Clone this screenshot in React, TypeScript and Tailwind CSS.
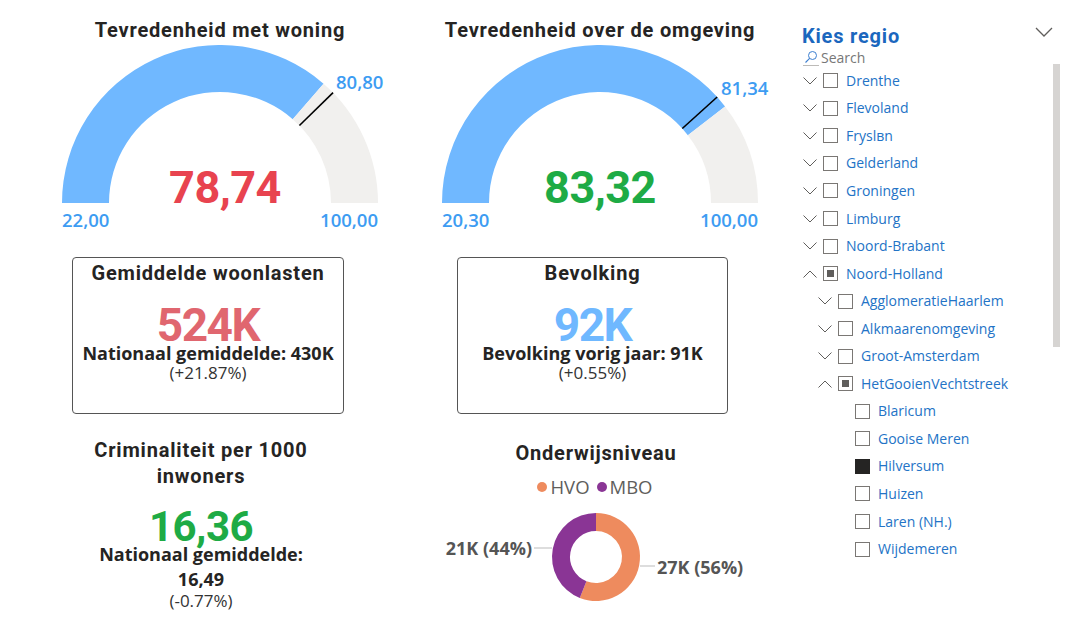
const TITLE = "font-['Roboto',sans-serif] font-bold text-[20px] tracking-[0.8px] text-[#252423]";
const BODY = "font-['Open_Sans',sans-serif]";

function pt(cx: number, cy: number, r: number, a: number) {
  const rad = (a * Math.PI) / 180;
  return [cx - r * Math.cos(rad), cy - r * Math.sin(rad)];
}

function band(cx: number, cy: number, r0: number, r1: number, a0: number, a1: number) {
  const [x0, y0] = pt(cx, cy, r1, a0);
  const [x1, y1] = pt(cx, cy, r1, a1);
  const [x2, y2] = pt(cx, cy, r0, a1);
  const [x3, y3] = pt(cx, cy, r0, a0);
  return `M${x0} ${y0} A${r1} ${r1} 0 0 1 ${x1} ${y1} L${x2} ${y2} A${r0} ${r0} 0 0 0 ${x3} ${y3} Z`;
}

interface GaugeProps {
  title: string;
  min: number;
  max: number;
  value: number;
  target: number;
  valueColor: string;
  valueDx?: number;
  targetPos: [number, number];
}

const fmt = (n: number) => n.toFixed(2).replace(".", ",");

function Gauge({ title, min, max, value, target, valueColor, valueDx = 0, targetPos }: GaugeProps) {
  const cx = 190;
  const cy = 158;
  const av = ((value - min) / (max - min)) * 180;
  const at = ((target - min) / (max - min)) * 180;
  const [tx0, ty0] = pt(cx, cy, 111, at);
  const [tx1, ty1] = pt(cx, cy, 158, at);
  return (
    <div className="w-[380px]">
      <div className={`${TITLE} pt-[16px] text-center leading-[29px]`}>{title}</div>
      <svg width="380" height="190" className="block">
        <path d={band(cx, cy, 111, 158, 0, av)} fill="#70B8FF" />
        <path d={band(cx, cy, 111, 158, av, 180)} fill="#F1F0EE" />
        <line x1={tx0} y1={ty0} x2={tx1} y2={ty1} stroke="#000" strokeWidth="1.6" />
        <text
          x={cx + valueDx}
          y={cy}
          textAnchor="middle"
          fill={valueColor}
          fontFamily="Roboto, sans-serif"
          fontWeight="700"
          fontSize="45"
          letterSpacing="-0.5"
        >
          {fmt(value)}
        </text>
        <g fontFamily="'Open Sans', sans-serif" fontWeight="600" fontSize="18.5" fill="#3D9CF2">
          <text x={32} y={182}>
            {fmt(min)}
          </text>
          <text x={348} y={182} textAnchor="end">
            {fmt(max)}
          </text>
          <text x={targetPos[0]} y={targetPos[1]}>
            {fmt(target)}
          </text>
        </g>
      </svg>
    </div>
  );
}

function Card({
  title,
  value,
  color,
  sub,
  pct,
  className,
}: {
  title: string;
  value: string;
  color: string;
  sub: string;
  pct: string;
  className: string;
}) {
  return (
    <div className={`h-[157px] rounded-[4px] border border-[#555] text-center ${className}`}>
      <div className={`${TITLE} mt-[2px] leading-[26px]`}>{title}</div>
      <div
        className={`font-['Roboto',sans-serif] font-bold text-[46px] tracking-[-1.5px] leading-[36px] mt-[21px] ${color}`}
      >
        {value}
      </div>
      <div className={`${BODY} mt-[1px] font-bold text-[18px] leading-[18px] text-[#252423]`}>{sub}</div>
      <div className={`${BODY} text-[17px] leading-[22px] text-[#333]`}>{pct}</div>
    </div>
  );
}

function Donut() {
  const cx = 186;
  const cy = 59;
  const R = 44;
  const r = 26;
  const p = (rad: number, t: number) => {
    const a = (t * Math.PI) / 180;
    return [cx + rad * Math.sin(a), cy - rad * Math.cos(a)];
  };
  const seg = (t0: number, t1: number) => {
    const [a, b] = p(R, t0);
    const [c, d] = p(R, t1);
    const [e, f] = p(r, t1);
    const [g, h] = p(r, t0);
    const large = t1 - t0 > 180 ? 1 : 0;
    return `M${a} ${b} A${R} ${R} 0 ${large} 1 ${c} ${d} L${e} ${f} A${r} ${r} 0 ${large} 0 ${g} ${h} Z`;
  };
  const split = 0.56 * 360;
  return (
    <svg width="372" height="120" className="block">
      <path d={seg(0, split)} fill="#EE8B5E" />
      <path d={seg(split, 360)} fill="#8A3595" />
      <line x1="124" y1="50" x2="142" y2="50" stroke="#BBB" strokeWidth="1" />
      <line x1="230" y1="68" x2="245" y2="68" stroke="#BBB" strokeWidth="1" />
      <g fontFamily="'Open Sans', sans-serif" fontWeight="700" fontSize="18" fill="#555">
        <text x="122" y="57" textAnchor="end">
          21K (44%)
        </text>
        <text x="247" y="76">
          27K (56%)
        </text>
      </g>
    </svg>
  );
}

function Chevron({ up }: { up?: boolean }) {
  return (
    <svg width="14" height="8" viewBox="0 0 14 8" className="block">
      <path
        d={up ? "M0.5 7.5 L7 1 L13.5 7.5" : "M0.5 0.5 L7 7 L13.5 0.5"}
        fill="none"
        stroke="#605E5C"
        strokeWidth="1"
      />
    </svg>
  );
}

type Item = { label: string; level: 0 | 1 | 2; state?: "partial" | "checked"; open?: boolean };

const items: Item[] = [
  { label: "Drenthe", level: 0 },
  { label: "Flevoland", level: 0 },
  { label: "Fryslвn", level: 0 },
  { label: "Gelderland", level: 0 },
  { label: "Groningen", level: 0 },
  { label: "Limburg", level: 0 },
  { label: "Noord-Brabant", level: 0 },
  { label: "Noord-Holland", level: 0, state: "partial", open: true },
  { label: "AgglomeratieHaarlem", level: 1 },
  { label: "Alkmaarenomgeving", level: 1 },
  { label: "Groot-Amsterdam", level: 1 },
  { label: "HetGooienVechtstreek", level: 1, state: "partial", open: true },
  { label: "Blaricum", level: 2 },
  { label: "Gooise Meren", level: 2 },
  { label: "Hilversum", level: 2, state: "checked" },
  { label: "Huizen", level: 2 },
  { label: "Laren (NH.)", level: 2 },
  { label: "Wijdemeren", level: 2 },
];

function Checkbox({ state }: { state?: "partial" | "checked" }) {
  if (state === "checked") return <div className="h-[15px] w-[15px] bg-[#252423]" />;
  return (
    <div className="flex h-[15px] w-[15px] items-center justify-center border border-[#7A7774]">
      {state === "partial" && <div className="h-[7px] w-[7px] bg-[#605E5C]" />}
    </div>
  );
}

function Slicer() {
  return (
    <div className="w-[288px] pl-[12px] pr-[18px]">
      <div className="flex items-center justify-between pt-[23px]">
        <div className="font-['Roboto',sans-serif] text-[20px] font-bold tracking-[0.8px] leading-[26px] text-[#1B67BE]">
          Kies regio
        </div>
        <div className="mb-[8px] mr-[7px]">
          <svg width="18" height="10" viewBox="0 0 18 10" className="block">
            <path d="M1 1 L9 9 L17 1" fill="none" stroke="#605E5C" strokeWidth="1.3" />
          </svg>
        </div>
      </div>
      <div className="flex items-center">
        <div className="ml-[1px] h-[16px] w-[16px]">
          <svg width="16" height="16" viewBox="0 0 16 16" className="block">
            <circle cx="9.5" cy="5.5" r="4" fill="none" stroke="#3D7FD0" strokeWidth="1" />
            <path d="M6.6 8.4 L2.5 12.5" stroke="#3D7FD0" strokeWidth="1.1" />
            <path d="M0 15.5 L16 15.5" stroke="#BDBBB8" strokeWidth="1" />
          </svg>
        </div>
        <span className={`${BODY} ml-[2px] text-[14px] leading-[18px] text-[#777]`}>Search</span>
      </div>
      <div className="flex">
        <div className="flex-1">
          {items.map((it) => (
            <div
              key={it.label}
              className={`flex h-[27.55px] items-center ${
                it.level === 0 ? "pl-[1px]" : it.level === 1 ? "pl-[16px]" : "pl-[53px]"
              }`}
            >
              {it.level < 2 && (
                <div className="w-[20px]">
                  <Chevron up={it.open} />
                </div>
              )}
              <Checkbox state={it.state} />
              <span className={`${BODY} ml-[8px] text-[14px] leading-[18px] text-[#2373C6]`}>
                {it.label}
              </span>
            </div>
          ))}
        </div>
        <div className="w-[7px]">
          <div className="-mt-[3px] h-[283px] w-[7px] bg-[#D6D4D2]" />
        </div>
      </div>
    </div>
  );
}

export default function App() {
  return (
    <div className="flex h-[622px] w-[1078px] overflow-hidden bg-white">
      <div className="ml-[30px] w-[760px]">
        <div className="flex">
          <Gauge
            title="Tevredenheid met woning"
            min={22}
            max={100}
            value={78.74}
            target={80.8}
            valueColor="#E8434F"
            valueDx={5}
            targetPos={[306, 44]}
          />
          <Gauge
            title="Tevredenheid over de omgeving"
            min={20.3}
            max={100}
            value={83.32}
            target={81.34}
            valueColor="#1EAB45"
            targetPos={[311, 50]}
          />
        </div>
        <div className="mt-[22px] flex">
          <Card
            className="ml-[42px] w-[272px]"
            title="Gemiddelde woonlasten"
            value="524K"
            color="text-[#E0666F]"
            sub="Nationaal gemiddelde: 430K"
            pct="(+21.87%)"
          />
          <Card
            className="ml-[113px] w-[271px]"
            title="Bevolking"
            value="92K"
            color="text-[#6FB8FF]"
            sub="Bevolking vorig jaar: 91K"
            pct="(+0.55%)"
          />
        </div>
        <div className="flex">
          <div className="w-[380px] pr-[38px] pt-[23px] text-center">
            <div className={`${TITLE} mx-auto w-[250px] leading-[26px]`}>Criminaliteit per 1000 inwoners</div>
            <div className="mt-[24px] font-['Roboto',sans-serif] text-[42px] font-bold tracking-[-0.5px] leading-[28px] text-[#1EAB45]">
              16,36
            </div>
            <div className={`${BODY} mx-auto mt-[1px] w-[230px] text-[18px] font-bold leading-[25px] text-[#252423]`}>
              Nationaal gemiddelde: 16,49
            </div>
            <div className={`${BODY} text-[17px] leading-[18px] text-[#333]`}>(-0.77%)</div>
          </div>
          <div className="w-[380px] pr-[8px] pt-[26px] text-center">
            <div className={`${TITLE} leading-[26px]`}>Onderwijsniveau</div>
            <div className="mt-[10px] flex h-[22px] items-center justify-center pr-[2px]">
              <span className="h-[10px] w-[10px] rounded-full bg-[#EE8B5E]" />
              <span className={`${BODY} ml-[3px] text-[18.5px] leading-[22px] text-[#605E5C]`}>HVO</span>
              <span className="ml-[7px] h-[10px] w-[10px] rounded-full bg-[#8A3595]" />
              <span className={`${BODY} ml-[3px] text-[18.5px] leading-[22px] text-[#605E5C]`}>MBO</span>
            </div>
            <Donut />
          </div>
        </div>
      </div>
      <Slicer />
    </div>
  );
}
